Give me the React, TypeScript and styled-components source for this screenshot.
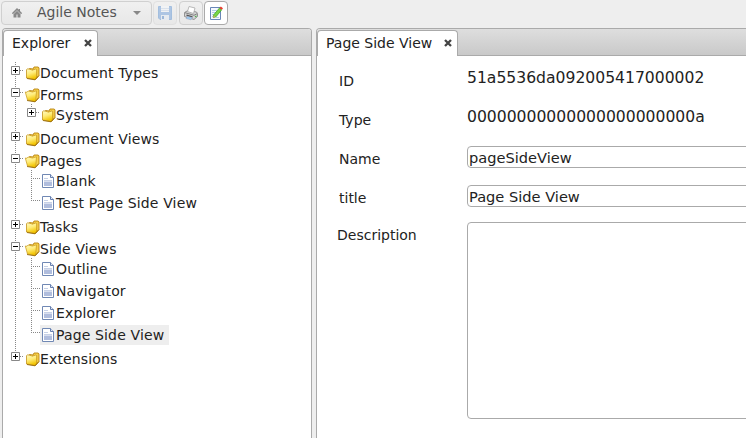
import React from "react";
import styled, { createGlobalStyle, css } from "styled-components";

const Global = createGlobalStyle`
  * { box-sizing: border-box; }
  html, body { margin: 0; height: 100%; overflow: hidden; }
  body {
    background: #eee;
    color: #222;
    font-family: "DejaVu Sans", Verdana, sans-serif;
    font-size: 14px;
  }
`;

const Shell = styled.div`
  height: 438px;
  width: 746px;
  overflow: hidden;
  display: flex;
  flex-direction: column;
`;

const Toolbar = styled.div`
  height: 28px;
  padding: 1px 0 0 1px;
  display: flex;
  flex: none;
  align-items: flex-start;
`;

const buttonBox = css`
  height: 24px;
  border: 1px solid #d0d0d0;
  border-radius: 4px;
  background: linear-gradient(#f0f0f0, #e8e8e8);
  display: flex;
  align-items: center;
`;

const AppMenu = styled.div`
  ${buttonBox}
  width: 151px;
  flex: none;
  padding-left: 10px;
  color: #555;
  white-space: nowrap;
  margin-right: 1px;
`;

const MenuText = styled.span`
  width: 111px;
  flex: none;
  padding-left: 15px;
  margin-top: -2px;
`;

const IconButton = styled.div<{ $active?: boolean; $faded?: boolean; $gap?: number }>`
  ${buttonBox}
  width: 24px;
  justify-content: center;
  margin-right: ${(p) => p.$gap ?? 0}px;
  ${(p) => p.$faded && "border-color: #e0e0e0;"}
  ${(p) => p.$active && "border-color: #aaa; background: #fff;"}
`;

const Panels = styled.div`
  flex: 1;
  min-height: 0;
  display: flex;
  gap: 4px;
  padding-left: 2px;
`;

const Panel = styled.section<{ $width: number }>`
  width: ${(p) => p.$width}px;
  flex: none;
  border: 1px solid #aaa;
  border-bottom: 0;
  border-radius: 4px 4px 0 0;
  background: #fff;
  display: flex;
  flex-direction: column;
`;

const TabBar = styled.div`
  height: 27px;
  flex: none;
  padding-top: 1px;
  background: linear-gradient(#dedede, #c9c9c9);
  border-bottom: 1px solid #aaa;
  border-radius: 3px 3px 0 0;
`;

const Tab = styled.div<{ $width: number }>`
  width: ${(p) => p.$width}px;
  height: 26px;
  border: 1px solid #aaa;
  border-bottom: 0;
  border-radius: 4px 4px 0 0;
  background: #fff;
  display: flex;
  align-items: center;
  justify-content: space-between;
  padding: 0 5px 2px 8px;
  white-space: nowrap;
  color: #222;
`;

const Tree = styled.ul<{ $line: number }>`
  list-style: none;
  margin: 6px 0 0;
  padding: 0 0 0 8px;
  letter-spacing: 0.14px;
  background: repeating-linear-gradient(#888 0 1px, transparent 1px 2px) 12px 0 / 1px ${(p) => p.$line}px no-repeat;
`;

const Branch = styled.ul<{ $count: number }>`
  list-style: none;
  margin: -2px 0 2px;
  padding: 0 0 0 16px;
  background: repeating-linear-gradient(#888 0 1px, transparent 1px 2px) 20px 0 / 1px
    ${(p) => p.$count * 22 - 13}px no-repeat;
`;

const Row = styled.div`
  height: 22px;
  display: flex;
  align-items: flex-start;
`;

const Gutter = styled.span<{ $leaf: boolean }>`
  width: 13px;
  height: 13px;
  flex: none;
  background: repeating-linear-gradient(90deg, #888 0 1px, transparent 1px 2px)
    ${(p) => (p.$leaf ? "4px 8px / 9px" : "9px 8px / 4px")} 1px no-repeat;
`;

const Toggle = styled.svg`
  display: block;
  margin-top: 4px;
`;

const Item = styled.span<{ $selected?: boolean }>`
  height: 20px;
  margin-top: 1px;
  padding-right: 5px;
  display: flex;
  align-items: center;
  white-space: nowrap;
  background: ${(p) => (p.$selected ? "#eee" : "transparent")};
`;

const Glyph = styled.svg`
  display: block;
  flex: none;
`;

const Form = styled.div`
  padding: 1px 0 0 20px;
  display: flex;
  flex-direction: column;
  flex: none;
`;

const Field = styled.div<{ $height?: number }>`
  display: grid;
  grid-template-columns: 130px 300px;
  height: ${(p) => p.$height ?? 39}px;
`;

const Label = styled.label<{ $top?: number; $outdent?: boolean }>`
  padding-top: ${(p) => p.$top ?? 15}px;
  padding-left: ${(p) => (p.$outdent ? 0 : 2)}px;
  line-height: 18px;
  white-space: nowrap;
`;

const Value = styled.span`
  padding-top: 12px;
  line-height: 19px;
  font-size: 15.6px;
`;

const fieldBox = css`
  border: 1px solid #aaa;
  border-radius: 4px;
  background: #fff;
  color: #222;
  font-family: inherit;
  outline: none;
`;

const Input = styled.input`
  ${fieldBox}
  height: 22px;
  margin: 11px 0 0;
  padding: 0 1px;
  font-size: 14.6px;
`;

const TextArea = styled.textarea`
  ${fieldBox}
  height: 197px;
  margin: 9px 0 0;
  resize: none;
`;

const CloseIcon = () => (
  <Glyph width="8" height="8" viewBox="0 0 8 8">
    <path d="M1 1l6 6M7 1L1 7" stroke="#444" strokeWidth="2.3" />
  </Glyph>
);

const HomeIcon = () => (
  <Glyph width="10" height="10" viewBox="0 0 10 10">
    <path d="M0 5l5-5 1.800 1.800V1h1.200v2l2 2v.8H8.500V9.500h-3V6.500h-1v3h-3V5.800H0z" fill="#888" />
    <path d="M1.500 6L5 2.500 8.500 6" fill="none" stroke="#e4e4e4" strokeWidth=".6" />
  </Glyph>
);

const SaveIcon = () => (
  <Glyph width="16" height="16" viewBox="0 0 16 16" opacity="0.5">
    <path d="M1.500 1.500h13v13H3l-1.500-1.500z" fill="#6f9fdc" stroke="#5c92d2" />
    <path d="M4 1h8v6H4z" fill="#f4f8fd" />
    <path d="M4 3.500h8M4 5.500h8" stroke="#c5d5ea" />
    <path d="M4 10h8v5H4z" fill="#e3ebf6" />
    <path d="M5 11h2v3H5z" fill="#4f83c6" />
  </Glyph>
);

const PrintIcon = () => (
  <Glyph width="16" height="16" viewBox="0 0 16 16">
    <path d="M1.500 7.500L5 5.500l8.500 1.500 1 1.500v3L11 14.500 1.500 11.500z" fill="#d4d4d4" stroke="#8a8a8a" strokeWidth=".9" />
    <path d="M4.500 6.500l1.500-5 6 1.500-1.500 5.500z" fill="#fff" stroke="#aaa" strokeWidth=".8" />
    <path d="M2 7.700l9 2.600 3-1.600" fill="none" stroke="#777" strokeWidth=".9" />
    <path d="M3.500 10.200l6 1.600" stroke="#555" strokeWidth="1.300" />
    <path d="M4 11.500l5.500 1L8 14.800l-5-1.300z" fill="#9cccf0" stroke="#88a" strokeWidth=".4" />
    <path d="M12 11.800l1.500-.8" stroke="#4caf50" strokeWidth="1.200" />
  </Glyph>
);

const EditIcon = () => (
  <Glyph width="16" height="16" viewBox="0 0 16 16">
    <path d="M2.500 2.500h10v12h-10z" fill="#f5f9ff" stroke="#6987b8" />
    <path d="M4 5.500h5M4 7.500h4M4 9.500h2M4 11.500h1M8 12.500h3" stroke="#b4cce8" />
    <path d="M5.500 10L11.500 3l2.200 1.800L8 11.800l-2.700.8z" fill="#79d645" stroke="#35a01e" strokeWidth=".7" />
    <path d="M11.500 3l1.300-1.500 2.200 1.800-1.300 1.500z" fill="#ed3d2f" />
    <path d="M5 12.800l.5-2.300L7.500 12z" fill="#d8a860" />
  </Glyph>
);

const FolderIcon = ({ open }: { open?: boolean }) => (
  <Glyph width="16" height="16" viewBox="0 0 16 16">
    <defs>
      <linearGradient id="gold" x1="0" y1="0" x2="0.3" y2="1">
        <stop offset="0" stopColor="#fffbc4" />
        <stop offset=".5" stopColor="#ffec7a" />
        <stop offset="1" stopColor="#f2c400" />
      </linearGradient>
    </defs>
    <path d="M5.500 3.500l3.500.5 1-2h4l1 .8v7.700l-3.500 4z" fill="#f6d04a" stroke="#b98312" strokeWidth=".9" />
    {open ? (
      <path d="M1.300 5l1.700.3L4 4l4.500 1 4-1.200-.7 9.200-1 1.500L3.500 13z" fill="url(#gold)" stroke="#cda024" strokeWidth=".8" />
    ) : (
      <path d="M2.500 4.800l.9-1 3.600.6.8.8 4-1.200.9.5v8L11 14.500 2.500 13z" fill="url(#gold)" stroke="#c4921a" strokeWidth=".8" />
    )}
    <path d="M3 13.500l8 1.300 3.800-4.200" fill="none" stroke="#9a6c08" strokeWidth=".9" />
  </Glyph>
);

const FileIcon = () => (
  <Glyph width="16" height="16" viewBox="0 0 16 16">
    <path d="M2.500 1.500h8l3 3v10h-11z" fill="#fff" stroke="#7088b4" />
    <path d="M10.500 1.500v3h3" fill="#dfe6f4" stroke="#667fae" />
    <path d="M4 5h4v1H4zM4 7h8v1H4z" fill="#c6d0e6" />
    <path d="M4 8.500h8V13H4z" fill="#b0bddd" />
  </Glyph>
);

type Node = { name: string; children?: Node[]; folder?: boolean; selected?: boolean };

const nodes: Node[] = [
  { name: "Document Types", folder: true },
  { name: "Forms", folder: true, children: [{ name: "System", folder: true }] },
  { name: "Document Views", folder: true },
  { name: "Pages", folder: true, children: [{ name: "Blank" }, { name: "Test Page Side View" }] },
  { name: "Tasks", folder: true },
  {
    name: "Side Views",
    folder: true,
    children: [
      { name: "Outline" },
      { name: "Navigator" },
      { name: "Explorer" },
      { name: "Page Side View", selected: true },
    ],
  },
  { name: "Extensions", folder: true },
];

const TreeNode = ({ node }: { node: Node }) => {
  const open = !!node.children;
  return (
    <li>
      <Row>
        <Gutter $leaf={!node.folder}>
          {node.folder && (
            <Toggle width="9" height="9" viewBox="0 0 9 9">
              <path d="M.5.5h8v8h-8z" fill="#fff" stroke="#888" />
              <path d={open ? "M2 4.500h5" : "M2 4.500h5M4.500 2v5"} stroke="#000" />
            </Toggle>
          )}
        </Gutter>
        <Item $selected={node.selected}>
          {node.folder ? <FolderIcon open={open} /> : <FileIcon />}
          {node.name}
        </Item>
      </Row>
      {node.children && (
        <Branch $count={node.children.length}>
          {node.children.map((c) => (
            <TreeNode key={c.name} node={c} />
          ))}
        </Branch>
      )}
    </li>
  );
};

export default function App() {
  return (
    <Shell>
      <Global />
      <Toolbar>
        <AppMenu>
          <HomeIcon />
          <MenuText>Agile Notes</MenuText>
          <Glyph width="8" height="4" viewBox="0 0 8 4">
            <path d="M0 0h8L4 4z" fill="#888" />
          </Glyph>
        </AppMenu>
        <IconButton $faded $gap={2}>
          <SaveIcon />
        </IconButton>
        <IconButton $gap={1}>
          <PrintIcon />
        </IconButton>
        <IconButton $active>
          <EditIcon />
        </IconButton>
      </Toolbar>
      <Panels>
        <Panel $width={310}>
          <TabBar>
            <Tab $width={95}>
              Explorer
              <CloseIcon />
            </Tab>
          </TabBar>
          <Tree $line={294}>
            {nodes.map((n) => (
              <TreeNode key={n.name} node={n} />
            ))}
          </Tree>
        </Panel>
        <Panel $width={440}>
          <TabBar>
            <Tab $width={141}>
              Page Side View
              <CloseIcon />
            </Tab>
          </TabBar>
          <Form>
            <Field>
              <Label>ID</Label>
              <Value>51a5536da092005417000002</Value>
            </Field>
            <Field>
              <Label>Type</Label>
              <Value>00000000000000000000000a</Value>
            </Field>
            <Field>
              <Label>Name</Label>
              <Input defaultValue="pageSideView" />
            </Field>
            <Field>
              <Label>title</Label>
              <Input defaultValue="Page Side View" />
            </Field>
            <Field $height={206}>
              <Label $top={13} $outdent>
                Description
              </Label>
              <TextArea />
            </Field>
          </Form>
        </Panel>
      </Panels>
    </Shell>
  );
}
